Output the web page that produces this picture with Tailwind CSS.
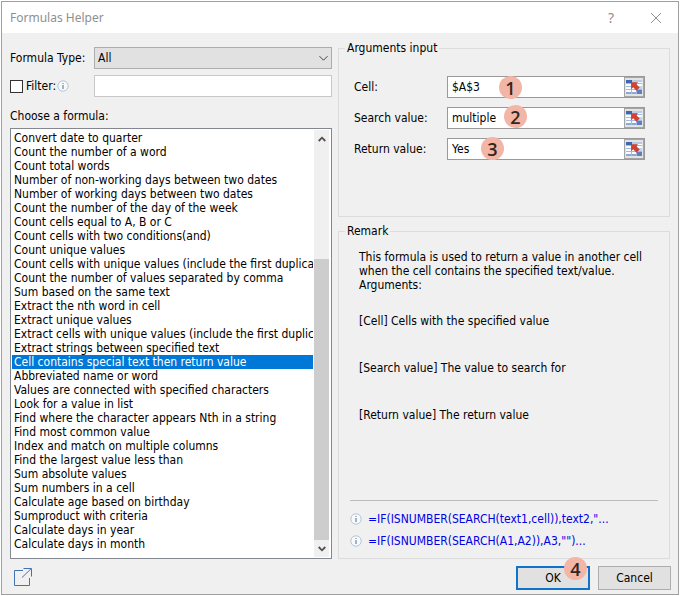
<!DOCTYPE html>
<html lang="en">
<head>
<meta charset="utf-8">
<meta name="viewport" content="width=device-width, initial-scale=1">
<title>Formulas Helper</title>
<script src="https://cdn.jsdelivr.net/npm/@tailwindcss/browser@4"></script>
</head>
<body class="bg-white font-['DejaVu_Sans_Condensed','DejaVu_Sans',sans-serif] text-[12px] leading-[14px] text-black">
<svg class="hidden" aria-hidden="true">
  <symbol id="info" viewBox="0 0 12 12">
    <circle cx="6" cy="6" r="5.200" fill="#f7fafd" stroke="#a3b9d0" stroke-width=".8"/>
    <path d="M6 5v4" stroke="#56697f" stroke-width="1"/><circle cx="6" cy="3.500" r=".6" fill="#56697f"/>
  </symbol>
  <symbol id="range" viewBox="0 0 16 14">
    <path d="M0 0h16v14H0z" fill="#fbfdff"/>
    <path d="M0 3.500h16M0 6.500h16M0 9.500h16M5.500 3v11M10.500 3v11" stroke="#9db9e4" stroke-width="1" fill="none"/>
    <path d="M0 0h6v3H0z" fill="#3f67ad"/><path d="M6 0h10v2H6z" fill="#b7cbea"/>
    <path d="M0 12h5v2H0zM6 12h4v2H6z" fill="#8da8d6"/><path d="M11 10h5v4h-5z" fill="#5f7fc0"/>
    <path d="M11 6h5v3h-5z" fill="#c3d3ee"/>
    <path d="M5.500 2.500h6L10 4.200 13.300 7.500 10.500 10.300 7.200 7 5.500 8.600z" fill="#d8402c" stroke="#a8301f" stroke-width=".5"/>
  </symbol>
</svg>
<main class="flex min-h-screen p-px">
<div class="flex flex-1 flex-col border border-[#a0a0a0] bg-[#f0f0f0]">
  <header class="flex h-[31px] items-center bg-white pl-2 pr-4 text-[#8f8f8f]">
    <h1 class="flex-1 font-['Noto_Sans',sans-serif] text-[12px]">Formulas Helper</h1>
    <button type="button" aria-label="Help" class="mr-9 font-['Noto_Sans',sans-serif] text-[14px]">?</button>
    <button type="button" aria-label="Close"><svg class="size-3" viewBox="0 0 12 12"><path d="M1 1l10 10M11 1L1 11" stroke="#8f8f8f" stroke-width="1" fill="none"/></svg></button>
  </header>
  <form class="flex flex-1 flex-col px-2">
    <div class="grid flex-1 grid-cols-[322fr_332fr] gap-x-1.5 pt-3.5">
      <section class="flex min-w-0 flex-col">
        <div class="flex h-[22px] items-center">
          <label for="type" class="w-[84px]">Formula Type:</label>
          <div class="relative flex-1">
            <select id="type" class="block h-[22px] w-full appearance-none border border-[#adadad] bg-[#e1e1e1] px-[3px]"><option>All</option></select>
            <svg class="pointer-events-none absolute right-1 top-2 h-[7px] w-[9px]" viewBox="0 0 9 7"><path d="M.5 1.200l4 4 4-4" stroke="#444" fill="none"/></svg>
          </div>
        </div>
        <div class="mt-1.5 flex h-[22px] items-center">
          <div class="flex w-[84px] items-center">
            <input id="filter" type="checkbox" class="mr-[3px] size-[13px] appearance-none border border-[#333] bg-white">
            <label for="filter">Filter:</label>
            <svg class="ml-px size-3"><use href="#info"/></svg>
          </div>
          <input aria-label="Filter text" class="h-[22px] min-w-0 flex-1 border border-[#c8c8c8] bg-white px-1">
        </div>
        <label for="list" class="mt-3 mb-[5px]">Choose a formula:</label>
        <div class="flex flex-1 border border-[#828790] bg-white p-px">
          <select id="list" size="30" class="block h-[427px] min-w-0 flex-1 appearance-none overflow-hidden bg-white pt-px leading-[14px] [&>option]:h-[14px] [&>option]:min-h-0 [&>option]:overflow-hidden [&>option]:px-0.5 [&>option]:py-0 [&>option]:leading-[14px] [&>option:checked]:bg-[linear-gradient(#0078d7,#0078d7)] [&>option:checked]:[-webkit-text-fill-color:white]">
            <option>Convert date to quarter</option>
            <option>Count the number of a word</option>
            <option>Count total words</option>
            <option>Number of non-working days between two dates</option>
            <option>Number of working days between two dates</option>
            <option>Count the number of the day of the week</option>
            <option>Count cells equal to A, B or C</option>
            <option>Count cells with two conditions(and)</option>
            <option>Count unique values</option>
            <option>Count cells with unique values (include the first duplicate)</option>
            <option>Count the number of values separated by comma</option>
            <option>Sum based on the same text</option>
            <option>Extract the nth word in cell</option>
            <option>Extract unique values</option>
            <option>Extract cells with unique values (include the first duplicate)</option>
            <option>Extract strings between specified text</option>
            <option selected>Cell contains special text then return value</option>
            <option>Abbreviated name or word</option>
            <option>Values are connected with specified characters</option>
            <option>Look for a value in list</option>
            <option>Find where the character appears Nth in a string</option>
            <option>Find most common value</option>
            <option>Index and match on multiple columns</option>
            <option>Find the largest value less than</option>
            <option>Sum absolute values</option>
            <option>Sum numbers in a cell</option>
            <option>Calculate age based on birthday</option>
            <option>Sumproduct with criteria</option>
            <option>Calculate days in year</option>
            <option>Calculate days in month</option>
          </select>
          <div class="ml-px mr-px flex w-[15px] flex-col bg-[#f0f0f0]">
            <button type="button" aria-label="Scroll up" class="flex h-[17px] items-center justify-center"><svg class="h-[6px] w-2" viewBox="0 0 8 6"><path d="M.7 5L4 1.700 7.300 5" stroke="#505050" stroke-width="1.800" fill="none"/></svg></button>
            <div class="flex-[112]"></div>
            <div class="flex-[281] bg-[#cdcdcd]"></div>
            <button type="button" aria-label="Scroll down" class="flex h-[17px] items-center justify-center"><svg class="h-[6px] w-2" viewBox="0 0 8 6"><path d="M.7 1L4 4.300 7.300 1" stroke="#505050" stroke-width="1.800" fill="none"/></svg></button>
          </div>
        </div>
      </section>
      <section class="flex min-w-0 flex-col">
        <div role="group" aria-labelledby="args" class="mt-px h-[169px] border border-[#dcdcdc]">
          <h2 id="args" class="-mt-2 ml-1.5 w-fit bg-[#f0f0f0] px-0.5">Arguments input</h2>
          <div class="mt-[21px] ml-[15px] mr-6 grid grid-cols-[93px_1fr] items-center gap-y-[9px]">
            <label for="cell">Cell:</label>
            <div class="relative flex h-[22px] border border-[#999] bg-white">
              <input id="cell" value="$A$3" class="min-w-0 flex-1 px-1">
              <button type="button" aria-label="Select cell range" class="flex w-5 items-center justify-center border border-[#a5a5a5] bg-[#e3e3e3]"><svg class="h-3.5 w-4"><use href="#range"/></svg></button>
              <span class="absolute -top-px left-[51px] flex size-[23px] items-center justify-center rounded-full bg-[#f3b5a5] font-['Open_Sans',sans-serif] text-[18px] font-semibold text-[#33261f]">1</span>
            </div>
            <label for="search">Search value:</label>
            <div class="relative flex h-[22px] border border-[#999] bg-white">
              <input id="search" value="multiple" class="min-w-0 flex-1 px-1">
              <button type="button" aria-label="Select search range" class="flex w-5 items-center justify-center border border-[#a5a5a5] bg-[#e3e3e3]"><svg class="h-3.5 w-4"><use href="#range"/></svg></button>
              <span class="absolute -top-[3px] left-[56px] flex size-[23px] items-center justify-center rounded-full bg-[#f3b5a5] font-['Open_Sans',sans-serif] text-[18px] font-semibold text-[#33261f]">2</span>
            </div>
            <label for="return">Return value:</label>
            <div class="relative flex h-[22px] border border-[#999] bg-white">
              <input id="return" value="Yes" class="min-w-0 flex-1 px-1">
              <button type="button" aria-label="Select return range" class="flex w-5 items-center justify-center border border-[#a5a5a5] bg-[#e3e3e3]"><svg class="h-3.5 w-4"><use href="#range"/></svg></button>
              <span class="absolute -top-0.5 left-[33px] flex size-[23px] items-center justify-center rounded-full bg-[#f3b5a5] font-['Open_Sans',sans-serif] text-[18px] font-semibold text-[#33261f]">3</span>
            </div>
          </div>
        </div>
        <div role="group" aria-labelledby="remark" class="mt-3.5 flex flex-1 flex-col border border-[#dcdcdc]">
          <h2 id="remark" class="-mt-2 ml-1.5 w-fit bg-[#f0f0f0] px-0.5">Remark</h2>
          <div class="mt-3 flex-1 pl-5">
            <p>This formula is used to return a value in another cell<br>when the cell contains the specified text/value.<br>Arguments:</p>
            <p class="mt-[22px]">[Cell] Cells with the specified value</p>
            <p class="mt-[33px]">[Search value] The value to search for</p>
            <p class="mt-[33px]">[Return value] The return value</p>
          </div>
          <div class="mx-[11px] flex flex-col gap-2 border-t border-[#bdbdbd] pt-[11px] pb-2.5 text-[#0000e6]">
            <a href="#" class="flex items-center gap-1.5"><svg class="size-3"><use href="#info"/></svg>=IF(ISNUMBER(SEARCH(text1,cell)),text2,"...</a>
            <a href="#" class="flex items-center gap-1.5"><svg class="size-3"><use href="#info"/></svg>=IF(ISNUMBER(SEARCH(A1,A2)),A3,"")...</a>
          </div>
        </div>
      </section>
    </div>
    <footer class="flex items-start pt-[7px] pb-1">
      <button type="button" aria-label="Open in new window" class="mt-0.5 ml-1"><svg class="size-[18px]" viewBox="0 0 18 18"><path d="M9 2.500H.5v15h15V10M8 9.500L17 .8M9.500.5h8v8" stroke="#4472b0" stroke-width="1" fill="none"/></svg></button>
      <span class="flex-1"></span>
      <button type="button" class="relative h-6 w-[74px] border-2 border-[#0f74c7] bg-[#e1e1e1]">OK<span class="absolute -top-[11px] right-px flex size-[23px] items-center justify-center rounded-full bg-[#f3b5a5] font-['Open_Sans',sans-serif] text-[18px] font-semibold text-[#33261f]">4</span></button>
      <button type="button" class="-mr-px ml-2 h-6 w-[73px] border border-[#adadad] bg-[#e1e1e1]">Cancel</button>
    </footer>
  </form>
</div>
</main>
</body>
</html>
